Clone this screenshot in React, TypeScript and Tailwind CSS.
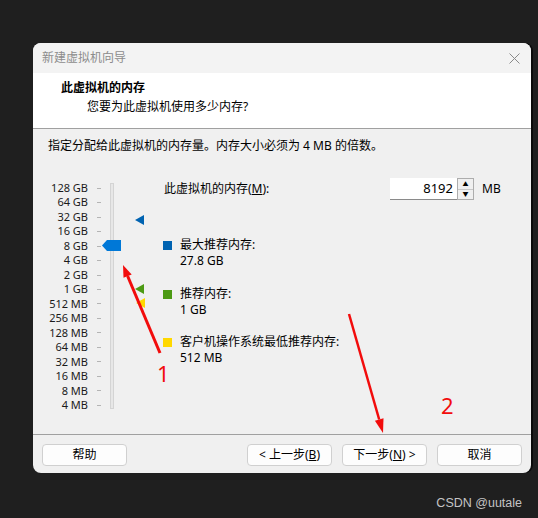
import React from 'react';

const labels = ['128 GB', '64 GB', '32 GB', '16 GB', '8 GB', '4 GB', '2 GB', '1 GB', '512 MB', '256 MB', '128 MB', '64 MB', '32 MB', '16 MB', '8 MB', '4 MB'];

const font = { fontFamily: '"Noto Sans", "Noto Sans CJK SC", sans-serif' };

function LeftTri({ color, className }: { color: string; className: string }) {
  return (
    <svg className={`absolute ${className}`} width="9" height="10" viewBox="0 0 9 10">
      <polygon points="0,5 9,0 9,10" fill={color} />
    </svg>
  );
}

function Legend({ color, title, value }: { color: string; title: string; value: string }) {
  return (
    <div className="flex">
      <div className={`w-[9px] h-[9px] mt-[4px] ${color}`}></div>
      <div className="ml-[8px] leading-4">
        <div>{title}</div>
        <div>{value}</div>
      </div>
    </div>
  );
}

function Btn({ children }: { children: React.ReactNode }) {
  return (
    <button className="w-[85px] h-[22px] rounded-[4px] border border-[#d0d0d0] bg-[#fdfdfd] text-[12px] text-black leading-none">
      {children}
    </button>
  );
}

export default function App() {
  return (
    <div className="relative w-[538px] h-[518px] bg-[#1f1f1f] overflow-hidden text-[12px] text-black" style={font}>
      <div className="pt-[43px] pl-[33px]">
        <div className="w-[498px] rounded-[8px] overflow-hidden bg-[#f0f0f0] shadow-[2px_0_0_#0a0a0a]">
          {/* title bar */}
          <div className="h-[30px] bg-[#f3f3f3] flex items-center justify-between pl-[9px] pr-[11px]">
            <span className="text-[#8c8c8c] text-[12px]">新建虚拟机向导</span>
            <svg width="11" height="11" viewBox="0 0 11 11">
              <path d="M0.5 0.5 L10.5 10.5 M10.5 0.5 L0.5 10.5" stroke="#8a8a8a" strokeWidth="1" />
            </svg>
          </div>
          {/* header */}
          <div className="h-[56px] bg-white border-b border-[#a0a0a0] pt-[7px]">
            <div className="pl-[28px] font-bold leading-4">此虚拟机的内存</div>
            <div className="pl-[54px] mt-[3px] leading-4">您要为此虚拟机使用多少内存?</div>
          </div>
          {/* body */}
          <div className="h-[305px] pt-[9px]">
            <div className="pl-[15px] leading-4">指定分配给此虚拟机的内存量。内存大小必须为 4 MB 的倍数。</div>
            <div className="flex mt-[24px]">
              <div className="relative w-[130px] flex pt-[3px]">
                <div className="w-[55px] flex flex-col text-right text-[11px] text-[#1a1a1a]">
                  {labels.map((l) => (
                    <div key={l} className="h-[14.47px] leading-[14.47px] whitespace-nowrap">{l}</div>
                  ))}
                </div>
                <div className="ml-[9px] w-[4px] flex flex-col">
                  {labels.map((l) => (
                    <div key={l} className="h-[14.47px] flex items-center">
                      <div className="w-[4px] h-[1px] bg-[#b4b4b4]"></div>
                    </div>
                  ))}
                </div>
                <div className="ml-[9px] mt-[2px] w-[4px] h-[226px] bg-[#e7e7e7] border border-[#d4d4d4]"></div>
                <svg className="absolute left-[69px] top-[62px]" width="19" height="11" viewBox="0 0 19 11">
                  <polygon points="0,5.5 5,0 19,0 19,11 5,11" fill="#0078d7" />
                </svg>
                <LeftTri color="#0063b1" className="left-[102px] top-[37px]" />
                <LeftTri color="#4c9a14" className="left-[102px] top-[106px]" />
                <LeftTri color="#ffd800" className="left-[103px] top-[120px]" />
              </div>
              <div className="flex flex-col">
                <div className="flex items-center h-[22px]">
                  <div className="w-[227px] pl-[1px]">
                    此虚拟机的内存(<span className="underline">M</span>):
                  </div>
                  <div className="w-[67px] h-[22px] bg-white border-b border-[#8a8a8a] flex items-center justify-end pr-[4px] text-[13px]">8192</div>
                  <div className="w-[17px] h-[22px] border border-[#adadad] flex flex-col bg-[#f0f0f0]">
                    <div className="flex-1 flex items-center justify-center border-b border-[#c8c8c8] text-[6px] leading-none">▲</div>
                    <div className="flex-1 flex items-center justify-center text-[6px] leading-none">▼</div>
                  </div>
                  <div className="ml-[8px]">MB</div>
                </div>
                <div className="mt-[37px] flex flex-col gap-[16.5px]">
                  <Legend color="bg-[#0063b1]" title="最大推荐内存:" value="27.8 GB" />
                  <Legend color="bg-[#4c9a14]" title="推荐内存:" value="1 GB" />
                  <Legend color="bg-[#ffd800]" title="客户机操作系统最低推荐内存:" value="512 MB" />
                </div>
              </div>
            </div>
          </div>
          {/* footer */}
          <div className="h-[39px] border-t border-[#a0a0a0] flex items-start pt-[9px] pl-[9px] pr-[9px]">
            <Btn>帮助</Btn>
            <div className="ml-auto flex gap-[10px]">
              <Btn>&lt; 上一步(<span className="underline">B</span>)</Btn>
              <Btn>下一步(<span className="underline">N</span>) &gt;</Btn>
              <Btn>取消</Btn>
            </div>
          </div>
        </div>
      </div>
      <div className="mt-[21px] pr-[16px] text-right text-[12.5px] text-[#c4c4c4]" style={{ fontFamily: '"Liberation Sans", Arial, sans-serif' }}>CSDN @uutale</div>

      {/* red annotations */}
      <svg className="absolute left-0 top-0 pointer-events-none" width="538" height="518" viewBox="0 0 538 518">
        <line x1="160" y1="353" x2="127.6" y2="276" stroke="#f20c0c" strokeWidth="3" />
        <polygon points="123,265 131.7,274.4 123.5,277.8" fill="#f20c0c" />
        <line x1="349" y1="314" x2="379.2" y2="419.5" stroke="#f20c0c" strokeWidth="2.5" />
        <polygon points="383,433 383.5,418.3 374.9,420.8" fill="#f20c0c" />
      </svg>
      <div className="absolute left-[157px] top-[359px] text-[22px] leading-[28px] text-[#f20c0c] pointer-events-none">1</div>
      <div className="absolute left-[441px] top-[391px] text-[22px] leading-[28px] text-[#f20c0c] pointer-events-none">2</div>
    </div>
  );
}
